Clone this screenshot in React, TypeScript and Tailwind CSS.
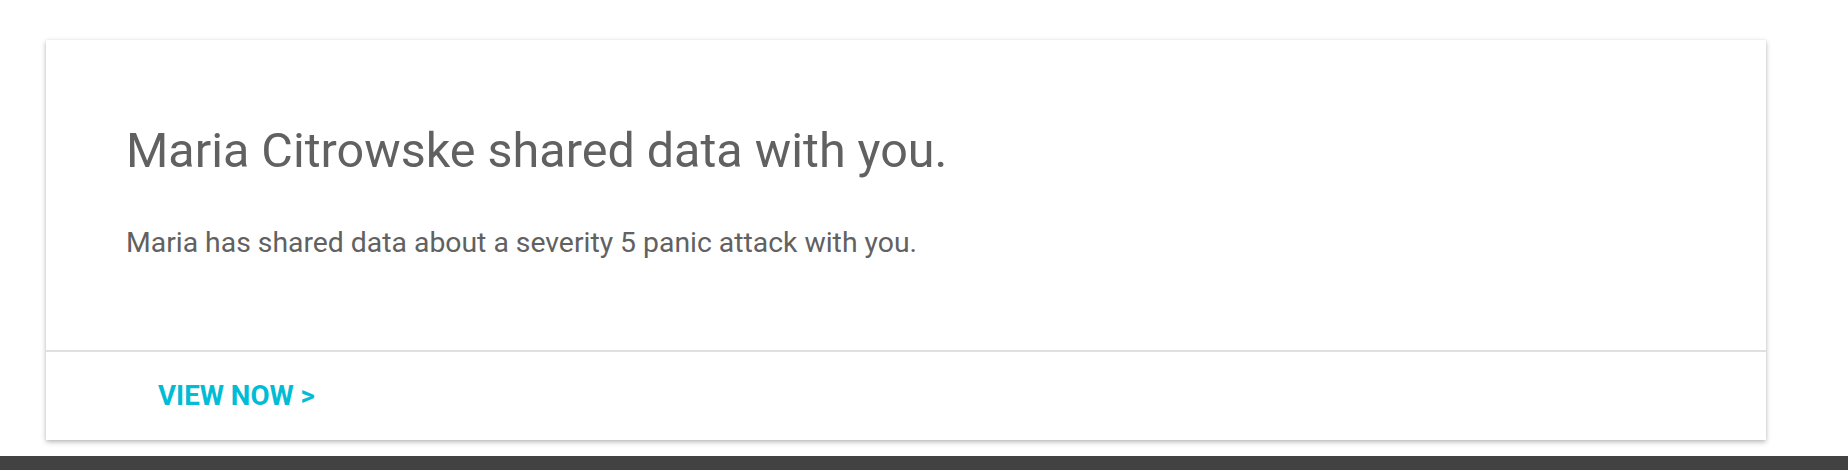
import React from "react";

export default function App() {
  return (
    <div className="w-[1848px] h-[470px] bg-white overflow-hidden" style={{ fontFamily: "Roboto, 'Noto Sans', sans-serif" }}>
      <div className="pt-[40px] pl-[46px]">
        <div className="w-[1720px] h-[400px] bg-white flex flex-col shadow-[0_2px_5px_rgba(0,0,0,0.28),0_0_2px_rgba(0,0,0,0.06)]">
          <div className="h-[310px] pl-[80px] pt-[83px]">
            <h1 className="text-[48.5px] leading-[56px] text-[#616161] font-normal">Maria Citrowske shared data with you.</h1>
            <p className="mt-[47px] text-[28.35px] leading-[34px] text-[#616161]">Maria has shared data about a severity 5 panic attack with you.</p>
          </div>
          <div className="h-[2px] bg-[#e0e0e0]" />
          <div className="flex-1 flex items-center pl-[112px]">
            <span className="text-[27.7px] leading-[34px] font-bold text-[#00bcd4]">VIEW NOW &gt;</span>
          </div>
        </div>
      </div>
      <div className="mt-[16px] h-[14px] bg-[#424242]" />
    </div>
  );
}
